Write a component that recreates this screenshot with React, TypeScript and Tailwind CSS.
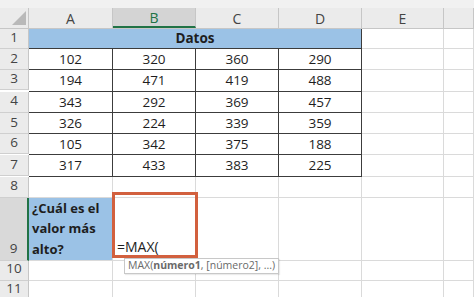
import React from "react";

const colW = ["w-[84px]", "w-[83px]", "w-[83px]", "w-[83px]", "w-[82px]", "w-[30px]"];
const letters = ["A", "B", "C", "D", "E", ""];
const rowH = [
  "h-[20px]",
  "h-[21px]",
  "h-[20px]",
  "h-[21px]",
  "h-[21px]",
  "h-[20px]",
  "h-[21px]",
  "h-[21px]",
  "h-[63px]",
  "h-[20px]",
  "h-[20px]",
];

const data = [
  [102, 320, 360, 290],
  [194, 471, 419, 488],
  [343, 292, 369, 457],
  [326, 224, 339, 359],
  [105, 342, 375, 188],
  [317, 433, 383, 225],
];

const grid = "border-r border-b border-[#dadada]";
const dark = "border-r border-b border-[#3c3c3c]";

function RowHead({ n, h, active }: { n: number; h: string; active?: boolean }) {
  return (
    <div
      className={`w-[29px] ${h} shrink-0 flex items-end justify-center pb-px text-[13.5px] text-[#444] border-b border-[#cfcfcf] ${
        active ? "bg-[#d9d9d9] border-r-2 border-r-[#217346]" : "bg-[#ebebeb] border-r border-r-[#c6c6c6]"
      }`}
    >
      {n}
    </div>
  );
}

export default function App() {
  return (
    <div
      className="relative w-[474px] h-[297px] overflow-hidden bg-white text-[#1e1e1e]"
      style={{ fontFamily: '"Open Sans", "Noto Sans", sans-serif' }}
    >
      {/* column headers */}
      <div className="h-[8px] bg-[#f1f1f1]" />
      <div className="flex h-[21px] bg-[#ebebeb] border-b border-[#c6c6c6]">
        <div className="w-[29px] shrink-0 relative border-r border-[#c6c6c6]">
          <svg className="absolute left-[12px] top-[3px]" width="14" height="14" viewBox="0 0 14 14">
            <path d="M14 0 L14 14 L0 14 Z" fill="#b9b9b9" />
          </svg>
        </div>
        {letters.map((l, i) => (
          <div
            key={i}
            className={`${colW[i]} shrink-0 flex items-center justify-center text-[14px] border-r border-[#c6c6c6] ${
              l === "B" ? "bg-[#d4d4d4] text-[#217346] border-b-2 border-b-[#217346]" : "text-[#444]"
            }`}
          >
            {l}
          </div>
        ))}
      </div>

      {/* row 1 */}
      <div className="flex">
        <RowHead n={1} h={rowH[0]} />
        <div className="w-[333px] h-[20px] shrink-0 bg-[#9bc2e6] border-r border-b border-[#3c3c3c] flex items-center justify-center font-bold text-[13.5px]">
          Datos
        </div>
        <div className={`${colW[4]} ${grid} shrink-0`} />
        <div className={`${colW[5]} ${grid} shrink-0`} />
      </div>

      {/* rows 2-7 */}
      {data.map((r, ri) => (
        <div key={ri} className="flex">
          <RowHead n={ri + 2} h={rowH[ri + 1]} />
          {r.map((v, ci) => (
            <div
              key={ci}
              className={`${colW[ci]} ${dark} shrink-0 flex items-center justify-center text-[13.5px]`}
            >
              {v}
            </div>
          ))}
          <div className={`${colW[4]} ${grid} shrink-0`} />
          <div className={`${colW[5]} ${grid} shrink-0`} />
        </div>
      ))}

      {/* row 8 */}
      <div className="flex">
        <RowHead n={8} h={rowH[7]} />
        {colW.map((w, i) => (
          <div key={i} className={`${w} ${grid} shrink-0`} />
        ))}
      </div>

      {/* row 9 */}
      <div className="flex h-[63px]">
        <RowHead n={9} h={rowH[8]} active />
        <div className={`${colW[0]} ${grid} shrink-0 bg-[#9bc2e6] pl-[3px] font-bold text-[13px] leading-[20.5px]`}>
          ¿Cuál es el
          <br />
          valor más
          <br />
          alto?
        </div>
        <div className={`${colW[1]} ${grid} shrink-0 flex items-end pl-[4px] pb-[3px] text-[14px]`}>=MAX(</div>
        <div className={`${colW[2]} ${grid} shrink-0`} />
        <div className={`${colW[3]} ${grid} shrink-0`} />
        <div className={`${colW[4]} ${grid} shrink-0`} />
        <div className={`${colW[5]} ${grid} shrink-0`} />
      </div>

      {/* rows 10-11 */}
      {[10, 11].map((n, ri) => (
        <div key={n} className="flex">
          <RowHead n={n} h={rowH[9 + ri]} />
          {colW.map((w, i) => (
            <div key={i} className={`${w} ${grid} shrink-0`} />
          ))}
        </div>
      ))}

      {/* annotation box */}
      <div className="absolute left-[112px] top-[192px] w-[86px] h-[66px] border-[3px] border-[#d2603e]" />

      {/* function tooltip */}
      <div className="absolute left-[124px] top-[258px] h-[16px] px-[3px] flex items-center bg-white border border-[#c8c8c8] text-[10.5px] text-[#6a6a6a] shadow-[1px_1px_1px_rgba(0,0,0,0.08)] whitespace-nowrap">
        MAX(<span className="font-bold">número1</span>, [número2], ...)
      </div>
    </div>
  );
}
